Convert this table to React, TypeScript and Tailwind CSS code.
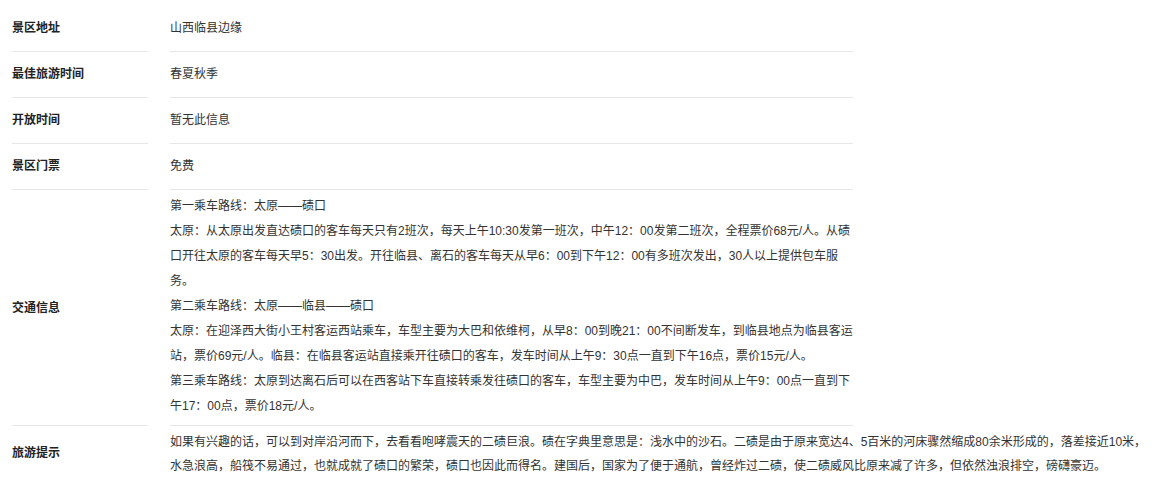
import React from 'react';

const FONT = { fontFamily: '"Liberation Sans", "Noto Sans CJK SC", sans-serif' };

const simpleRows = [
  { label: '景区地址', value: '山西临县边缘' },
  { label: '最佳旅游时间', value: '春夏秋季' },
  { label: '开放时间', value: '暂无此信息' },
  { label: '景区门票', value: '免费' },
];

const traffic = [
  '第一乘车路线：太原——碛口',
  '太原：从太原出发直达碛口的客车每天只有2班次，每天上午10:30发第一班次，中午12：00发第二班次，全程票价68元/人。从碛口开往太原的客车每天早5：30出发。开往临县、离石的客车每天从早6：00到下午12：00有多班次发出，30人以上提供包车服务。',
  '第二乘车路线：太原——临县——碛口',
  '太原：在迎泽西大街小王村客运西站乘车，车型主要为大巴和依维柯，从早8：00到晚21：00不间断发车，到临县地点为临县客运站，票价69元/人。临县：在临县客运站直接乘开往碛口的客车，发车时间从上午9：30点一直到下午16点，票价15元/人。',
  '第三乘车路线：太原到达离石后可以在西客站下车直接转乘发往碛口的客车，车型主要为中巴，发车时间从上午9：00点一直到下午17：00点，票价18元/人。',
];

const tips =
  '如果有兴趣的话，可以到对岸沿河而下，去看看咆哮震天的二碛巨浪。碛在字典里意思是：浅水中的沙石。二碛是由于原来宽达4、5百米的河床骤然缩成80余米形成的，落差接近10米，水急浪高，船筏不易通过，也就成就了碛口的繁荣，碛口也因此而得名。建国后，国家为了便于通航，曾经炸过二碛，使二碛威风比原来减了许多，但依然浊浪排空，磅礴豪迈。';

export default function App() {
  return (
    <div className="bg-white text-[12px] text-[#333] pt-[6px] min-h-[483px] overflow-hidden" style={FONT}>
      {simpleRows.map((row) => (
        <div key={row.label} className="flex">
          <div className="ml-3 w-[136px] border-b border-[#e6e6e6] pt-[10px] pb-[10px] leading-[25px] font-bold text-[#222]">
            {row.label}
          </div>
          <div className="ml-[22px] w-[683px] border-b border-[#e6e6e6] pt-[10px] pb-[10px] leading-[25px]">
            {row.value}
          </div>
        </div>
      ))}

      {/* 交通信息 */}
      <div className="flex">
        <div className="ml-3 w-[136px] border-b border-[#e6e6e6] flex items-center font-bold text-[#222]">
          交通信息
        </div>
        <div className="ml-[22px] w-[683px] border-b border-[#e6e6e6] pt-[4px] pb-[6px] leading-[25px]">
          {traffic.map((p, i) => (
            <p key={i}>{p}</p>
          ))}
        </div>
      </div>

      {/* 旅游提示 */}
      <div className="flex">
        <div className="ml-3 w-[136px] flex items-center font-bold text-[#222]">旅游提示</div>
        <div className="ml-[22px] flex-1 mr-[2px] pt-[4px] pb-[2px] leading-[24px]">{tips}</div>
      </div>
    </div>
  );
}
